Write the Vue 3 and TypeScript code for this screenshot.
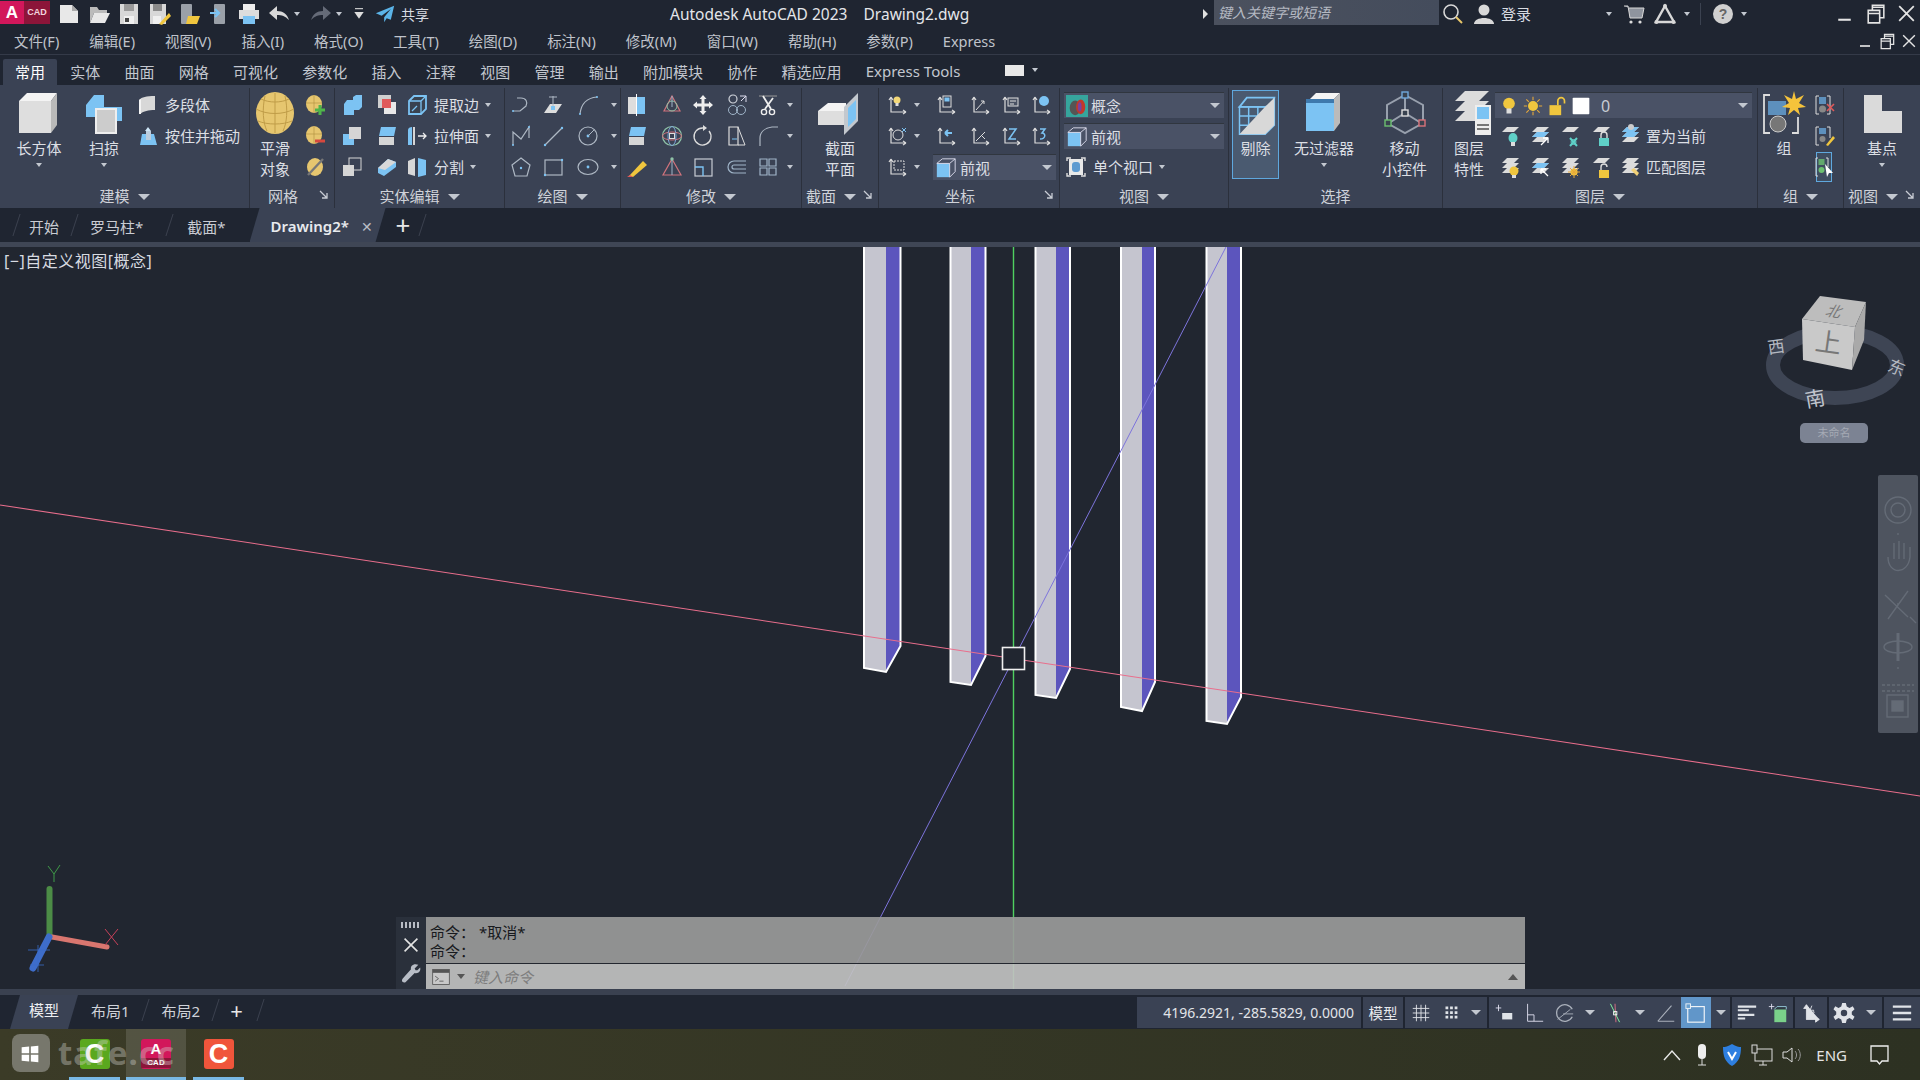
<script setup lang="ts">
interface Cell {
  k?: string
  i?: string
  more?: string[]
  t?: string
  drop?: boolean
  on?: boolean
  span?: number
}
interface Panel {
  title: string
  w: number
  cols: string
  pad?: number
  cells: Cell[]
  menu?: boolean
  launch?: boolean
}

const W = '#dcdcdc'
const B = '#7cc3f3'
const L = '#9fb4c8'
const sheet = (y: number, c = W) => `<polygon points="5,${y + 5} 10,${y} 22,${y} 17,${y + 5}" fill="${c}"/>`
const sheets = sheet(3) + sheet(8) + sheet(13)
const axes = `<path d="M6 4V19H21M6 4L4 7M6 4L8 7M21 19L18 17M21 19L18 21" stroke="${W}" fill="none" stroke-width="1.2"/>`
const pts = (d: string) => `<path d="${d}" stroke="#aeb8c4" stroke-width="1.2" fill="none"/>`

const icons: Record<string, string> = {
  box: `<polygon points="2,6 6,2 21,2 18,6" fill="#f4f4f4"/><polygon points="2,6 18,6 18,22 2,22" fill="#dedede"/><polygon points="18,6 21,2 21,18 18,22" fill="#b9b9b9"/>`,
  sweep: `<path d="M3 8L7 3H12V9H21V16H17V19H8V14H3Z" fill="${B}"/><rect x="8" y="10" width="10" height="12" fill="#ccc" stroke="#eee"/>`,
  poly: `<path d="M3 7C6 4 10 3 19 3V17C12 17 8 18 4 21Z" fill="#d8d8d8"/><path d="M3 7V21H5V6Z" fill="#f4f4f4"/>`,
  press: `<path d="M4 21L6 10H18L21 21Z" fill="${B}"/><path d="M12 3L9 7H15Z" fill="#cfe6f7"/><rect x="10" y="7" width="5" height="9" fill="#bcd"/>`,
  sphere: `<ellipse cx="12" cy="12" rx="9.5" ry="10.5" fill="#e6c66f"/><path d="M2.5 10C8 13 16 13 21.5 10M3.5 16C8 18 16 18 20.5 16M5 5C9 7 15 7 19 5M12 2V22M7 3.5C5.5 10 6 17 8 21M17 3.5C18.5 10 18 17 16 21" stroke="#c09d48" stroke-width=".5" fill="none"/>`,
  meshp: `<ellipse cx="11" cy="11" rx="8" ry="9" fill="#e6c66f"/><path d="M3 10H19M11 2V20" stroke="#b08e3e" stroke-width=".6"/><path d="M17 12V22M12 17H22" stroke="#4fb54a" stroke-width="3"/>`,
  meshm: `<ellipse cx="11" cy="11" rx="8" ry="9" fill="#e6c66f"/><path d="M3 10H19M11 2V20" stroke="#b08e3e" stroke-width=".6"/><path d="M12 17H22" stroke="#d5483e" stroke-width="3"/>`,
  meshs: `<ellipse cx="12" cy="12" rx="8" ry="9" fill="#e6c66f"/><path d="M5 20L20 4" stroke="#777" stroke-width="2.4"/>`,
  union: `<path d="M3 10L6 6H12V3L15 1H21V13L18 16H13V21H3Z" fill="${B}" transform="translate(1 1)"/>`,
  sub: `<rect x="3" y="2" width="13" height="13" fill="#cfcfcf"/><rect x="9" y="9" width="12" height="12" fill="#e8e8e8"/><rect x="7" y="6" width="9" height="9" fill="#e05a5a"/>`,
  edge: `<path d="M4 8L9 3H21V16L16 21H4Z" fill="#39424f" stroke="${B}" stroke-width="1.8"/><path d="M4 8H16V21M16 8L21 3M7 18L12 13" stroke="${B}" stroke-width="1.3" fill="none"/>`,
  inter: `<rect x="3" y="10" width="11" height="11" fill="${B}"/><rect x="9" y="3" width="12" height="12" fill="#d5d5d5"/>`,
  thick: `<path d="M6 3H21L19 12H4Z" fill="${B}"/><path d="M4 13H19V21H4Z" fill="#d5d5d5"/>`,
  extr: `<path d="M3 21V6C3 4 5 3 7 3V21Z" fill="${B}"/><path d="M8 3H10V21H8Z" fill="#d5d5d5"/><path d="M13 12H21M18 9L21 12L18 15" stroke="#eee" fill="none" stroke-width="1.3"/>`,
  interf: `<rect x="3" y="10" width="11" height="11" fill="#d5d5d5"/><rect x="9" y="3" width="12" height="12" fill="none" stroke="#d5d5d5"/>`,
  slice: `<path d="M3 13L13 4L21 7V12L9 21L3 18Z" fill="${B}"/><path d="M3 13L13 4L21 7L10 15Z" fill="#d8d8d8"/>`,
  split: `<path d="M3 6L10 3V21L3 19Z" fill="#d8d8d8"/><path d="M13 3L21 5V20L13 22Z" fill="${B}"/>`,
  dline: pts('M4 18H11L17 13C19 9 17 5 12 5H8') + `<circle cx="4" cy="18" r="1" fill="${B}"/>`,
  plane: `<path d="M3 20L9 11H21L15 20Z" fill="#ddd"/><path d="M12 3V15M8 4H16" stroke="#aeb8c4"/><rect x="10" y="13" width="4" height="4" fill="${B}"/>`,
  arc: pts('M4 21C5 11 11 5 21 4') + `<circle cx="4" cy="21" r="1" fill="${B}"/><circle cx="21" cy="4" r="1" fill="${B}"/>`,
  spline: pts('M4 21V8L12 15L20 3V14') + `<circle cx="4" cy="21" r="1" fill="${B}"/><circle cx="20" cy="3" r="1" fill="${B}"/>`,
  line: pts('M4 21L21 4') + `<circle cx="4" cy="21" r="1.2" fill="${B}"/><circle cx="21" cy="4" r="1.2" fill="${B}"/>`,
  circle: `<circle cx="12" cy="12" r="9" stroke="#aeb8c4" fill="none" stroke-width="1.2"/><circle cx="12" cy="12" r="1.4" fill="${B}"/><path d="M12 12L18 6" stroke="#aeb8c4"/>`,
  pent: pts('M12 3L21 10L18 21H6L3 10Z') + `<circle cx="12" cy="13" r="1.2" fill="${B}"/>`,
  rect: `<rect x="4" y="5" width="17" height="15" fill="none" stroke="#aeb8c4" stroke-width="1.2"/><circle cx="4" cy="20" r="1.2" fill="${B}"/><circle cx="21" cy="5" r="1.2" fill="${B}"/>`,
  ellip: `<ellipse cx="12" cy="12" rx="10" ry="7.5" stroke="#aeb8c4" fill="none" stroke-width="1.2"/><circle cx="12" cy="12" r="1.4" fill="${B}"/>`,
  align: `<rect x="3" y="4" width="8" height="17" fill="#ddd"/><rect x="12" y="4" width="8" height="17" fill="${B}"/><path d="M11.5 1V23" stroke="#fff"/>`,
  rot3d: `<path d="M12 3L20 18H4Z" fill="none" stroke="#d0737c" stroke-width="1.2"/><circle cx="12" cy="13" r="5" fill="none" stroke="#8fc3a8"/><path d="M12 3V14" stroke="${L}"/>`,
  orbit: `<circle cx="12" cy="12" r="9.5" fill="none" stroke="#8fc3a8" stroke-width="1.2"/><ellipse cx="12" cy="12" rx="9.5" ry="4" fill="none" stroke="#d0737c"/><ellipse cx="12" cy="12" rx="4" ry="9.5" fill="none" stroke="#7fa8d8"/><rect x="9.5" y="9.5" width="5" height="5" fill="none" stroke="#ddd"/>`,
  move: `<path d="M12 2L15.5 6H13.5V10.5H18V8.5L22 12L18 15.5V13.5H13.5V18H15.5L12 22L8.5 18H10.5V13.5H6V15.5L2 12L6 8.5V10.5H10.5V6H8.5Z" fill="#eee"/>`,
  copy: `<circle cx="8" cy="6" r="4" fill="none" stroke="#cfd3da" stroke-width="1.2"/><circle cx="8" cy="17" r="4.5" fill="none" stroke="${L}"/><circle cx="16" cy="17" r="4.5" fill="none" stroke="${L}"/><path d="M15 3H21V9M21 3L16 8" stroke="#dde" fill="none"/>`,
  scis: `<path d="M3 3H21" stroke="#999"/><path d="M7 3L15 16M17 5L9 16" stroke="#eee" stroke-width="1.8"/><circle cx="8" cy="19" r="2.6" fill="none" stroke="#eee" stroke-width="1.4"/><circle cx="16" cy="19" r="2.6" fill="none" stroke="#eee" stroke-width="1.4"/>`,
  rotate: `<path d="M18 7A8.5 8.5 0 1 1 12 4" stroke="#ddd" fill="none" stroke-width="1.3"/><path d="M12 1V7L16 4Z" fill="#ddd"/>`,
  stretch: `<path d="M4 3H13V21H4Z" fill="none" stroke="#ddd" stroke-width="1.2"/><path d="M13 3L20 21H13" fill="none" stroke="#ddd"/><path d="M7 15H12" stroke="${B}"/>`,
  fillet: pts('M4 22V14C4 8 9 4 16 3H22'),
  pencil: `<path d="M4 21L18 6L22 10L8 22Z" fill="#f0c63e"/><path d="M2 22L5 20L8 22Z" fill="#e05a5a"/>`,
  tri: `<path d="M12 4L21 20H3Z" fill="none" stroke="#d0737c" stroke-width="1.2"/><path d="M12 4V20" stroke="${L}"/><circle cx="12" cy="4" r="1.7" fill="#8fc3a8"/>`,
  scale: `<rect x="4" y="4" width="17" height="17" fill="none" stroke="#c7ccd4" stroke-width="1.2"/><path d="M4 12H12V21" fill="none" stroke="${B}" stroke-width="1.4"/>`,
  offset: `<path d="M21 6H9A6 6 0 0 0 9 18H21M21 10H9A2 2 0 0 0 9 14H21" fill="none" stroke="${L}" stroke-width="1.2"/>`,
  array: `<path d="M4 4H11V11H4ZM13 4H20V11H13ZM4 13H11V20H4ZM13 13H20V20H13Z" fill="none" stroke="${L}" stroke-width="1.2"/>`,
  section: `<polygon points="1,11 6,7 15,7 15,11" fill="#f4f4f4"/><polygon points="1,11 15,11 15,18 1,18" fill="#dedede"/><polygon points="14,9 21,2 21,16 14,23" fill="#c3c8ce"/><polygon points="16,9.5 20,5.5 20,15 16,19" fill="${B}"/>`,
  ucs1: axes + `<circle cx="12" cy="7" r="3.5" fill="#f3d878"/><rect x="10.5" y="10" width="3" height="3" fill="#ddd"/>`,
  ucs2: axes + `<rect x="9" y="3" width="8" height="11" fill="none" stroke="#ddd"/><rect x="10.5" y="4.5" width="5" height="4" fill="${B}"/>`,
  ucs3: axes + `<path d="M8 17L16 8M13 8H16V11" stroke="#ddd" fill="none"/>`,
  ucs4: axes + `<rect x="9" y="5" width="10" height="8" fill="#4a5263" stroke="#ddd"/><path d="M11 8H17M11 11H15" stroke="#ddd"/>`,
  ucs5: axes + `<circle cx="15" cy="8" r="5" fill="${B}"/>`,
  ucs6: axes + `<circle cx="13" cy="11" r="5" fill="none" stroke="#ddd"/><path d="M17 4L21 8M21 4L17 8" stroke="${B}"/>`,
  ucs7: axes + `<path d="M18 9H11M11 9L14 6M11 9L14 12" stroke="${B}" stroke-width="2" fill="none"/>`,
  ucs8: axes + `<path d="M8 17L17 8" stroke="#ddd"/><path d="M13 11L17 15" stroke="#ddd"/>`,
  ucsz: axes + `<path d="M10 5H17L10 15H17" stroke="${B}" fill="none" stroke-width="1.5"/>`,
  ucs3n: axes + `<path d="M11 5H16L13 9C17 9 17 15 11 15" stroke="${B}" fill="none" stroke-width="1.5"/>`,
  ucsw: axes + `<rect x="9" y="6" width="10" height="9" fill="none" stroke="#ddd" stroke-dasharray="2 1"/>`,
  conc: `<rect width="24" height="24" fill="#36a59d"/><ellipse cx="10" cy="14" rx="6" ry="8" fill="#555"/><ellipse cx="16" cy="13" rx="5" ry="8" fill="#c0392b"/><ellipse cx="15" cy="13" rx="2" ry="5" fill="#7b3fa0"/>`,
  front: `<rect x="2" y="7" width="14" height="15" fill="${B}"/><path d="M2 7L8 2H22V16L16 22M16 7L22 2M2 7H16V22" fill="none" stroke="#dde" stroke-width="1"/>`,
  vport: `<path d="M3 6V3H7M21 6V3H17M3 18V21H7M21 18V21H17" stroke="#ddd" fill="none" stroke-width="1.4"/><rect x="5" y="4" width="14" height="16" fill="#e8e8e8"/><rect x="8" y="7" width="8" height="10" rx="3" fill="#5d9ad0"/>`,
  hide: `<polygon points="3,7 7,2 22,2 21,6 17,7" fill="none" stroke="${B}"/><path d="M3 7H17V22H3ZM22 2V17L17 22M3 12H17M3 17H17M8 7V22M13 7V22" fill="none" stroke="${B}" stroke-width=".8"/><polygon points="3,22 17,7 22,2 22,17 17,22" fill="#d8d8d8"/>`,
  filter: `<polygon points="5,5 8,2 20,2 17,5" fill="#f4f4f4"/><polygon points="17,5 20,2 20,17 17,21" fill="#bbb"/><rect x="3" y="5" width="14" height="16" fill="${B}"/><rect x="3" y="5" width="14" height="2" fill="#3e79ad"/>`,
  gizmo: `<path d="M12 3L21 8V17L12 22L3 17V8Z" fill="none" stroke="#98a0ad"/><path d="M12 3V12M12 12L4 17M12 12L20 17" stroke="#98a0ad"/><rect x="10.5" y="1.5" width="3" height="3" fill="#39424f" stroke="#6fa8dc" stroke-width=".7"/><rect x="10.5" y="10.5" width="3" height="3" fill="#39424f" stroke="#ddd" stroke-width=".7"/><rect x="2" y="15.5" width="3" height="3" fill="#39424f" stroke="#6cc070" stroke-width=".7"/><rect x="19" y="15.5" width="3" height="3" fill="#39424f" stroke="#d9737a" stroke-width=".7"/>`,
  layers: sheet(1) + sheet(6) + sheet(11) + `<rect x="15" y="8" width="8" height="15" fill="#eee"/><rect x="16" y="9" width="6" height="6" fill="${B}"/><path d="M16 18H22M16 20H22" stroke="#777"/>`,
  bulb: `<circle cx="12" cy="9" r="7" fill="#f0c63e"/><rect x="9" y="15" width="6" height="6" fill="#ddd"/>`,
  sun: `<circle cx="12" cy="12" r="6" fill="#f0c63e"/><path d="M12 1V5M12 19V23M1 12H5M19 12H23M4 4L7 7M17 17L20 20M20 4L17 7M7 17L4 20" stroke="#e8a93a" stroke-width="1.3"/>`,
  unlock: `<rect x="3" y="11" width="14" height="12" fill="#f0c63e"/><path d="M13 11V6A4 4 0 0 1 21 6V9" fill="none" stroke="#f0c63e" stroke-width="2"/>`,
  wsq: `<rect x="2" y="2" width="20" height="20" rx="1" fill="#fff"/>`,
  l1: sheet(3) + `<ellipse cx="16" cy="14" rx="4.5" ry="5" fill="#5fd0c8"/><rect x="14" y="18" width="4" height="4" fill="#ddd"/>`,
  l2: sheets + sheet(8, B) + `<path d="M14 21L21 14M21 14V19M21 14H16" stroke="#fff" stroke-width="1.3" fill="none"/>`,
  l3: sheet(3) + `<path d="M13 14L20 22M20 14L13 22" stroke="#5fd0c8" stroke-width="2"/><circle cx="16.5" cy="18" r="2.5" fill="none" stroke="#5fd0c8"/>`,
  l4: sheet(3) + `<rect x="11" y="14" width="10" height="8" fill="#5fd0c8"/><path d="M13 14V11A3 3 0 0 1 19 11V14" stroke="#ddd" fill="none" stroke-width="1.4"/>`,
  lcur: sheets + sheet(8, B) + sheet(3, B) + `<circle cx="14" cy="3" r="3" fill="#ccc"/>`,
  l5: sheets + `<circle cx="17" cy="16" r="4.5" fill="#f0c63e"/><rect x="15" y="20" width="4" height="3" fill="#ddd"/>`,
  l6: sheets + sheet(8, B) + `<path d="M14 14L21 21M14 14V19M14 14H19" stroke="#fff" stroke-width="1.3" fill="none"/>`,
  l7: sheets + `<circle cx="17" cy="17" r="3.6" fill="#f0c63e"/><path d="M17 11V23M11 17H23M13 13L21 21M21 13L13 21" stroke="#e8a93a"/>`,
  l8: sheet(3) + `<rect x="11" y="15" width="10" height="8" fill="#f0c63e"/><path d="M13 15V12A3 3 0 0 1 19 12" stroke="#ddd" fill="none" stroke-width="1.4"/>`,
  lm: sheets + `<path d="M14 15L20 21L22 18L17 13Z" fill="#f0d078"/>`,
  grp: `<path d="M5 3H2V22H5M16 22H19V14" stroke="#ddd" fill="none" stroke-width=".9"/><rect x="4" y="6" width="9" height="7" fill="#5d90bd"/><circle cx="9" cy="17.5" r="4" fill="#777" stroke="#ccc" stroke-width=".5"/><path d="M17 1L18 5L22 3L19.5 7L23 9L19 9.5L20 13L17 10.5L14 13L15 9.5L11 9L14.5 7L12 3L16 5Z" fill="#f5c33b"/>`,
  ung: `<path d="M7 3H4V21H7M15 3H18V21H15" stroke="#ddd" fill="none"/><rect x="7" y="4" width="7" height="7" fill="#5d90bd"/><circle cx="10.5" cy="16" r="3.5" fill="#888"/><path d="M15 11L22 18M22 11L15 18" stroke="#e05a5a" stroke-width="1.6"/>`,
  gedit: `<path d="M7 3H4V21H7M15 3H18V14" stroke="#ddd" fill="none"/><rect x="7" y="4" width="7" height="6" fill="#5d90bd"/><circle cx="10.5" cy="15" r="3" fill="#888"/><path d="M14 21L21 12L23 14L16 22Z" fill="#f0c63e"/>`,
  gsel: `<path d="M6 3H4V21H6M14 3H16V12" stroke="#ddd" fill="none"/><rect x="6.5" y="4" width="6" height="6" fill="#6cc070" fill-opacity=".8"/><circle cx="9.5" cy="15" r="3" fill="#6cc070"/><path d="M13 9L21 18L17 18L15 22Z" fill="#fff"/>`,
  base: `<path d="M3 3H12V11H22V22H3Z" fill="#dadada"/>`,
  new: `<path d="M3 3H15L21 9V21H3Z" fill="#e8e8e8"/><path d="M15 3V9H21Z" fill="#aaa"/>`,
  open: `<path d="M3 5H10L12 8H20V11H7L3 21Z" fill="#bbb"/><path d="M7 11H23L18 21H3Z" fill="#e8e8e8"/>`,
  save: `<path d="M3 2H21V22H3Z" fill="#d8d8d8"/><rect x="7" y="2" width="10" height="7" fill="#9a9a9a"/><rect x="7" y="14" width="10" height="8" fill="#f0f0f0"/><rect x="8" y="16" width="4" height="4" fill="#444"/>`,
  saveas: `<path d="M3 2H19V22H3Z" fill="#d8d8d8"/><rect x="6" y="2" width="9" height="7" fill="#8a8a8a"/><rect x="6" y="14" width="8" height="8" fill="#f0f0f0"/><path d="M12 22L22 11L24 14L15 23Z" fill="#f0c63e"/>`,
  openw: `<rect x="4" y="2" width="11" height="20" rx="1" fill="#9aa0a8"/><path d="M11 14H23L20 22H9Z" fill="#f0c63e"/>`,
  savew: `<rect x="7" y="2" width="11" height="20" rx="1" fill="#9aa0a8"/><path d="M3 11H12M8 7L12 11L8 15" stroke="${B}" stroke-width="2.2" fill="none"/>`,
  print: `<rect x="6" y="2" width="12" height="6" fill="#eee"/><rect x="2" y="8" width="20" height="9" fill="#ddd"/><rect x="6" y="14" width="12" height="8" fill="${B}"/>`,
  undo: `<path d="M2 11L10 4V9C16 9 20 12 22 18C18 14 15 13 10 13V18Z" fill="#d8d8d8"/>`,
  redo: `<path d="M22 11L14 4V9C8 9 4 12 2 18C6 14 9 13 14 13V18Z" fill="#656b78"/>`,
  qat: `<path d="M6 4H18" stroke="#ddd" stroke-width="1.6"/><path d="M5 9H19L12 19Z" fill="#ddd"/>`,
  send: `<path d="M23 2L1 11L8 14L19 6L11 16V22L14 17L19 19Z" fill="#5bb4e8"/>`,
  search: `<circle cx="10" cy="10" r="7" fill="none" stroke="#d8d8d8" stroke-width="1.6"/><path d="M15 15L21 21" stroke="#e8c66a" stroke-width="2"/>`,
  user: `<circle cx="12" cy="8" r="5.5" fill="#d8d8d8"/><path d="M2 22C2 14 22 14 22 22Z" fill="#d8d8d8"/>`,
  cart: `<path d="M2 4H6L8 16H20L22 6H7" fill="#8f949e" stroke="#d8d8d8"/><circle cx="9" cy="20" r="1.6" fill="#ddd"/><circle cx="18" cy="20" r="1.6" fill="#ddd"/>`,
  a360: `<path d="M12 4L21 20H3Z" fill="none" stroke="#d8d8d8" stroke-width="2.4"/><circle cx="12" cy="4" r="2" fill="#d8d8d8"/><circle cx="3.5" cy="20" r="2" fill="#d8d8d8"/><circle cx="20.5" cy="20" r="2" fill="#d8d8d8"/>`,
  help: `<circle cx="12" cy="12" r="10" fill="#d0d0d0"/><text x="12" y="17" text-anchor="middle" font-size="14" font-weight="700" fill="#666" font-family="Liberation Sans">?</text>`,
  min: `<path d="M6 18H18" stroke="#e4e4e4" stroke-width="2"/>`,
  rest: `<path d="M5 9H16V21H5ZM5 9V12H16M9 9V4H20V16H16M9 4V6H20" stroke="#e4e4e4" fill="none" stroke-width="1.5"/>`,
  close: `<path d="M5 5L19 19M19 5L5 19" stroke="#e4e4e4" stroke-width="1.7"/>`,
  grid: `<path d="M7 3V21M12 3V21M17 3V21M3 7H21M3 12H21M3 17H21" stroke="#e0e3e8"/>`,
  dots: `<path d="M6 5h3v3H6zM11 5h3v3h-3zM16 5h3v3h-3zM6 10h3v3H6zM11 10h3v3h-3zM16 10h3v3h-3zM6 15h3v3H6zM11 15h3v3h-3zM16 15h3v3h-3z" fill="#e0e3e8"/>`,
  dyn: `<path d="M6 3V10M3 6.5H9" stroke="#dde" /><rect x="10" y="12" width="11" height="7" fill="#dfe3e8"/>`,
  ortho: `<path d="M5 2V21H22M5 14H12V21" stroke="#dde" fill="none"/>`,
  polar: `<path d="M21 8A9 9 0 1 0 21 16" fill="none" stroke="#aab0bb" stroke-width="1.4"/><path d="M5 19L19 8M11 13H22" stroke="#aab0bb"/>`,
  osnap: `<path d="M12 2L13 22" stroke="#c46a7e" stroke-width="1.2"/><path d="M7 2L17 22" stroke="#8fa"/><rect x="10.5" y="10.5" width="3.5" height="3.5" fill="none" stroke="#fff"/>`,
  angle: `<path d="M3 21H21M3 21L18 4" stroke="#aab0bb" stroke-width="1.2"/>`,
  mbox: `<rect x="3" y="5" width="18" height="17" fill="none" stroke="#eef3f8" stroke-width="1.3"/><rect x="1" y="2" width="5" height="5" fill="#6aa0d0" stroke="#eef3f8"/>`,
  lines: `<path d="M2 5H22M2 9H14M2 14H20M2 18H10" stroke="#e0e3e8" stroke-width="2.4"/>`,
  iso: `<path d="M5 2V8M2 5H8" stroke="#dde"/><rect x="8" y="8" width="13" height="14" fill="#7ad18a"/><path d="M8 8L11 5H21V8" fill="#2f3a44" stroke="#9cd"/>`,
  axis: `<path d="M7 3V19H21M7 19L16 11M7 3L4 7H10ZM21 19L17 16V22Z" stroke="#e0e3e8" fill="#e0e3e8"/><path d="M13 4L11 9H15L13 14" stroke="#e0e3e8" fill="none"/>`,
  gear: `<path d="M10 1H14L15 5L18 6.5L21.5 4.5L23.5 8L20.5 10.5V13.5L23.5 16L21.5 19.5L18 17.5L15 19L14 23H10L9 19L6 17.5L2.5 19.5L.5 16L3.5 13.5V10.5L.5 8L2.5 4.5L6 6.5L9 5ZM12 8.5A3.5 3.5 0 1 0 12 15.5A3.5 3.5 0 1 0 12 8.5Z" fill="#e0e3e8" fill-rule="evenodd"/>`,
  burger: `<path d="M2 5H22M2 12H22M2 19H22" stroke="#e0e3e8" stroke-width="2.6"/>`,
  chev: `<path d="M4 17L12 8L20 17" stroke="#e8e8e8" fill="none" stroke-width="1.4"/>`,
  mic: `<rect x="8" y="1" width="8" height="15" rx="4" fill="#eee"/><path d="M12 16V22M8 22H16" stroke="#ddd"/>`,
  shield: `<path d="M12 1C16 3.5 19 4 21 4C21 13 19 19 12 23C5 19 3 13 3 4C5 4 8 3.5 12 1Z" fill="#2e7fe0"/><path d="M8 9L12 16L16 9" stroke="#fff" fill="none" stroke-width="2"/>`,
  net: `<rect x="5" y="6" width="17" height="12" fill="none" stroke="#ddd"/><rect x="2" y="2" width="5" height="8" fill="#33352a" stroke="#ddd"/><path d="M13 18V22M9 22H17" stroke="#ddd"/>`,
  vol: `<path d="M3 9H7L12 5V19L7 15H3Z" fill="none" stroke="#ddd"/><path d="M15 8C17 10 17 14 15 16M18 6C21 9 21 15 18 18" stroke="#999" fill="none"/>`,
  note: `<path d="M4 3H21V18H15L12.5 21L10 18H4Z" fill="none" stroke="#eee" stroke-width="1.3"/>`,
  term: `<rect x="2" y="3" width="20" height="18" fill="#c8c8c8" stroke="#555"/><rect x="2" y="3" width="20" height="4" fill="#555"/><path d="M5 11L9 14L5 17M10 17H15" stroke="#555" fill="none"/>`,
  wrench: `<path d="M20 3L16 7L17 9L19 9L22 6C23 10 20 13 16 12L6 22C3 23 1 21 3 18L12 8C11 4 15 1 20 3Z" fill="#b8bdc6"/>`,
  win: `<path d="M2 4L11 3V11H2ZM13 3L22 2V11H13ZM2 13H11V21L2 20ZM13 13H22V22L13 21Z" fill="#fff"/>`
}

const panels: Panel[] = [
  { title: '建模', w: 250, menu: true, cols: '78px 52px 6px 1fr', cells: [
    { k: 'big', i: 'box', t: '长方体', drop: true }, { k: 'big', i: 'sweep', t: '扫掠', drop: true }, { k: 'sp' },
    { k: 'txt', i: 'poly', t: '多段体' }, { k: 'txt', i: 'press', t: '按住并拖动' }
  ] },
  { title: '网格', w: 85, launch: true, cols: '50px 30px', cells: [
    { k: 'big', i: 'sphere', t: '平滑\n对象' }, { i: 'meshp' }, { i: 'meshm' }, { i: 'meshs' }
  ] },
  { title: '实体编辑', w: 170, menu: true, cols: '34px 36px 1fr', cells: [
    { i: 'union' }, { i: 'sub' }, { k: 'txt', i: 'edge', t: '提取边', drop: true },
    { i: 'inter' }, { i: 'thick' }, { k: 'txt', i: 'extr', t: '拉伸面', drop: true },
    { i: 'interf' }, { i: 'slice' }, { k: 'txt', i: 'split', t: '分割', drop: true }
  ] },
  { title: '绘图', w: 116, menu: true, cols: '32px 32px 38px 14px', cells: [
    { i: 'dline' }, { i: 'plane' }, { i: 'arc' }, { k: 'cr' },
    { i: 'spline' }, { i: 'line' }, { i: 'circle' }, { k: 'cr' },
    { i: 'pent' }, { i: 'rect' }, { i: 'ellip' }, { k: 'cr' }
  ] },
  { title: '修改', w: 181, menu: true, cols: '32px 38px 24px 44px 18px 25px', cells: [
    { i: 'align' }, { i: 'rot3d' }, { i: 'move' }, { i: 'copy' }, { i: 'scis' }, { k: 'cr' },
    { i: 'thick' }, { i: 'orbit' }, { i: 'rotate' }, { i: 'stretch' }, { i: 'fillet' }, { k: 'cr' },
    { i: 'pencil' }, { i: 'tri' }, { i: 'scale' }, { i: 'offset' }, { i: 'array' }, { k: 'cr' }
  ] },
  { title: '截面', w: 77, menu: true, launch: true, cols: '1fr', cells: [{ k: 'big', i: 'section', t: '截面\n平面' }] },
  { title: '坐标', w: 181, launch: true, pad: 6, cols: '24px 16px 42px 26px 36px 24px', cells: [
    { i: 'ucs1' }, { k: 'cr' }, { i: 'ucs2' }, { i: 'ucs3' }, { i: 'ucs4' }, { i: 'ucs5' },
    { i: 'ucs6' }, { k: 'cr' }, { i: 'ucs7' }, { i: 'ucs8' }, { i: 'ucsz' }, { i: 'ucs3n' },
    { i: 'ucsw' }, { k: 'cr' }, { k: 'combo narrow', i: 'front', t: '前视', span: 4 }
  ] },
  { title: '视图', w: 169, menu: true, pad: 4, cols: '160px', cells: [
    { k: 'combo', i: 'conc', t: '概念' }, { k: 'combo', i: 'front', t: '前视' },
    { k: 'txt', i: 'vport', t: '单个视口', drop: true }
  ] },
  { title: '选择', w: 214, cols: '53px 84px 77px', cells: [
    { k: 'big', i: 'hide', t: '剔除', on: true }, { k: 'big', i: 'filter', t: '无过滤器', drop: true }, { k: 'big', i: 'gizmo', t: '移动\n小控件' }
  ] },
  { title: '图层', w: 315, menu: true, cols: '52px 28px 32px 28px 34px 1fr', cells: [
    { k: 'big', i: 'layers', t: '图层\n特性' },
    { k: 'combo layer', more: ['bulb', 'sun', 'unlock', 'wsq'], t: '0', span: 5 },
    { i: 'l1' }, { i: 'l2' }, { i: 'l3' }, { i: 'l4' }, { k: 'txt', i: 'lcur', t: '置为当前' },
    { i: 'l5' }, { i: 'l6' }, { i: 'l7' }, { i: 'l8' }, { k: 'txt', i: 'lm', t: '匹配图层' }
  ] },
  { title: '组', w: 86, menu: true, cols: '52px 28px', cells: [
    { k: 'big', i: 'grp', t: '组' }, { i: 'ung' }, { i: 'gedit' }, { i: 'gsel', on: true }
  ] },
  { title: '视图', w: 76, menu: true, launch: true, cols: '1fr', cells: [{ k: 'big', i: 'base', t: '基点', drop: true }] }
]

const qat = ['new', 'open', 'save', 'saveas', 'openw', 'savew', 'print']
const menus = ['文件(F)', '编辑(E)', '视图(V)', '插入(I)', '格式(O)', '工具(T)', '绘图(D)', '标注(N)', '修改(M)', '窗口(W)', '帮助(H)', '参数(P)', 'Express']
const tabs = ['常用', '实体', '曲面', '网格', '可视化', '参数化', '插入', '注释', '视图', '管理', '输出', '附加模块', '协作', '精选应用', 'Express Tools']

const status = [
  [{ i: 'grid', w: 32 }, { i: 'dots', w: 28 }, { w: 22 }],
  [{ i: 'dyn', w: 30 }, { i: 'ortho', w: 30 }, { i: 'polar', w: 30 }, { w: 22 }, { i: 'osnap', w: 28 }, { w: 22 }, { i: 'angle', w: 30 }, { i: 'mbox', w: 30, on: true }, { w: 19 }],
  [{ i: 'lines', w: 30 }, { i: 'iso', w: 31 }],
  [{ i: 'axis', w: 32 }],
  [{ i: 'gear', w: 30 }, { w: 23 }],
  [{ i: 'burger', w: 36 }]
]

// column footprints in the drawing: left, split, right edge and the three bottom ends
const columns = [
  { a: 864, b: 886, c: 900.5, yl: 668, ym: 672, yr: 646 },
  { a: 950.5, b: 971, c: 985.5, yl: 682, ym: 685, yr: 656 },
  { a: 1035.5, b: 1056, c: 1070, yl: 695, ym: 698, yr: 669 },
  { a: 1121, b: 1142, c: 1155, yl: 707, ym: 711, yr: 682 },
  { a: 1206.5, b: 1227, c: 1241, yl: 721, ym: 724, yr: 697 }
]
</script>

<template>
  <div class="app">
    <header class="title">
      <div class="logo"><b>A</b><span>CAD</span></div>
      <div class="qat">
        <span v-for="q in qat" :key="q" class="slot"><svg class="ic" viewBox="0 0 24 24" v-html="icons[q]" /></span>
        <span class="slot"><svg class="ic" viewBox="0 0 24 24" v-html="icons.undo" /></span>
        <i class="caret tiny" />
        <span class="slot"><svg class="ic" viewBox="0 0 24 24" v-html="icons.redo" /></span>
        <i class="caret tiny" />
        <svg class="qat-more" viewBox="0 0 24 24" v-html="icons.qat" />
        <svg class="share-ic" viewBox="0 0 24 24" v-html="icons.send" />
        <span class="share">共享</span>
      </div>
      <div class="doc-name">Autodesk AutoCAD 2023&nbsp;&nbsp;&nbsp;&nbsp;Drawing2.dwg</div>
      <i class="more-tri" />
      <div class="search">键入关键字或短语</div>
      <span class="slot w28"><svg class="ic" viewBox="0 0 24 24" v-html="icons.search" /></span>
      <span class="slot w34"><svg class="ic" viewBox="0 0 24 24" v-html="icons.user" /></span>
      <span class="login">登录</span>
      <i class="caret small login-caret" />
      <span class="slot cart"><svg class="ic" viewBox="0 0 24 24" v-html="icons.cart" /></span>
      <span class="slot w26"><svg class="ic" viewBox="0 0 24 24" v-html="icons.a360" /></span>
      <i class="caret small" />
      <span class="vsep" />
      <span class="slot w24"><svg class="ic" viewBox="0 0 24 24" v-html="icons.help" /></span>
      <i class="caret small help-caret" />
      <div class="win">
        <svg viewBox="0 0 24 24" v-html="icons.min" />
        <svg viewBox="0 0 24 24" v-html="icons.rest" />
        <svg viewBox="0 0 24 24" v-html="icons.close" />
      </div>
    </header>

    <nav class="menubar">
      <span v-for="m in menus" :key="m">{{ m }}</span>
      <div class="win mini">
        <svg viewBox="0 0 24 24" v-html="icons.min" />
        <svg viewBox="0 0 24 24" v-html="icons.rest" />
        <svg viewBox="0 0 24 24" v-html="icons.close" />
      </div>
    </nav>

    <nav class="ribbon-tabs">
      <span v-for="(t, n) in tabs" :key="t" :class="{ active: n === 0 }">{{ t }}</span>
      <i class="tab-state" />
      <i class="caret tiny" />
    </nav>

    <section class="ribbon">
      <div v-for="(p, n) in panels" :key="n" class="panel" :style="{ width: p.w + 'px' }">
        <div class="panel-body" :style="{ gridTemplateColumns: p.cols, paddingLeft: (p.pad || 0) + 'px' }">
          <div
            v-for="(c, j) in p.cells"
            :key="j"
            class="cell"
            :class="[c.k, { on: c.on }]"
            :style="c.span ? { gridColumn: 'span ' + c.span } : undefined"
          >
            <i v-if="c.k === 'cr'" class="caret small" />
            <template v-else-if="c.k !== 'sp'">
              <svg v-for="m in c.more" :key="m" class="ic" viewBox="0 0 24 24" v-html="icons[m]" />
              <svg v-if="c.i" class="ic" viewBox="0 0 24 24" v-html="icons[c.i]" />
              <span v-if="c.t" class="label">{{ c.t }}</span>
              <i v-if="c.drop || c.k?.startsWith('combo')" class="caret small" />
            </template>
          </div>
        </div>
        <footer class="panel-foot">
          <div class="foot-title">{{ p.title }}<i v-if="p.menu" class="caret" /></div>
          <svg v-if="p.launch" class="launch" viewBox="0 0 10 10"><path d="M1 1L8 8M8 3V8H3" stroke="#c8ccd4" fill="none" stroke-width="1.3" /></svg>
        </footer>
      </div>
    </section>

    <nav class="doc-tabs">
      <i class="slash" /><span class="dt w-a">开始</span>
      <i class="slash" /><span class="dt w-b">罗马柱*</span>
      <i class="slash" /><span class="dt w-c">截面*</span>
      <div class="dt-active"><b>Drawing2*</b><em>✕</em></div>
      <span class="plus">+</span>
      <i class="slash" />
    </nav>
    <div class="rule" />

    <main class="viewport">
      <svg class="scene" viewBox="0 247 1920 742">
        <g v-for="c in columns" :key="c.a">
          <polygon :points="`${c.a},247 ${c.b},247 ${c.b},${c.ym} ${c.a},${c.yl}`" fill="#c5c5cf" />
          <polygon :points="`${c.b},247 ${c.c},247 ${c.c},${c.yr} ${c.b},${c.ym}`" fill="#5c55bd" />
          <path :d="`M${c.a} 247V${c.yl}L${c.b} ${c.ym}L${c.c} ${c.yr}V247`" fill="none" stroke="#fff" stroke-width="2" />
        </g>
        <line x1="0" y1="505" x2="1920" y2="796" stroke="#e96e8c" stroke-width="1.1" />
        <line x1="845" y1="986" x2="1226" y2="247" stroke="#7d74dc" stroke-width="1" />
        <line x1="1013.5" y1="247" x2="1013.5" y2="989" stroke="#4fd060" stroke-width="1.4" />
        <rect x="1002.5" y="647.5" width="22" height="22" fill="#212630" stroke="#f0f0f0" stroke-width="1.6" />
        <!-- ucs icon -->
        <line x1="49.5" y1="889" x2="49.5" y2="935" stroke="#4c8c46" stroke-width="6" stroke-linecap="round" />
        <line x1="52" y1="937" x2="107" y2="947" stroke="#d9766f" stroke-width="5" stroke-linecap="round" />
        <line x1="49" y1="937" x2="33" y2="968" stroke="#3e6dca" stroke-width="7" stroke-linecap="round" />
        <path d="M48 866L54 874L60 865M54 874V882" stroke="#3f9a48" fill="none" />
        <path d="M105 929L118 945M118 929L105 945" stroke="#c8415a" fill="none" />
        <path d="M28 950H50M30 965H44M38 945V972" stroke="#3b6cc8" fill="none" stroke-width=".8" />
      </svg>

      <div class="view-label">[−]自定义视图[概念]</div>

      <svg class="cube" viewBox="1760 285 160 170">
        <ellipse cx="1835" cy="365" rx="62" ry="33" fill="none" stroke="#3e4554" stroke-width="14" />
        <polygon points="1820,296 1866,302 1855,327 1802,319" fill="#bdbdbd" />
        <polygon points="1802,319 1855,327 1852,370 1803,360" fill="#c9c9c9" />
        <polygon points="1855,327 1866,302 1864,340 1852,370" fill="#a9a9a9" />
        <text x="1828" y="352" class="cube-t" font-size="26" fill="#777" transform="rotate(8 1828 345)">上</text>
        <text x="0" y="6" class="cube-t" font-size="15" fill="#777" transform="translate(1835 311) rotate(8) skewX(-22)">北</text>
        <text x="1776" y="353" class="cube-t" font-size="17" fill="#b4b8c0" transform="rotate(-8 1776 346)">西</text>
        <text x="1897" y="374" class="cube-t" font-size="17" fill="#b4b8c0" transform="rotate(22 1897 367)">东</text>
        <text x="1815" y="406" class="cube-t" font-size="20" fill="#c0c4cc" transform="rotate(-10 1815 398)">南</text>
      </svg>
      <div class="ucs-name">未命名</div>

      <svg class="nav-bar" viewBox="0 0 40 258">
        <g fill="none" stroke="#646b76" stroke-width="1.4">
          <circle cx="20" cy="35" r="13" /><circle cx="20" cy="35" r="7" />
          <path d="M20 58v2M20 128v2M20 192v2" />
          <path d="M10 82c0 18 20 18 22 0v-10M16 84V68M21 84V66M26 84V68" />
          <path d="M7 120L30 142M30 116L10 144M32 142l6 6" />
          <ellipse cx="20" cy="172" rx="14" ry="6" /><path d="M20 158V186" stroke-width="3" />
          <path d="M4 210H36M4 216H36" stroke-dasharray="3 2" />
          <rect x="9" y="220" width="21" height="22" />
          <rect x="14" y="226" width="11" height="10" fill="#646b76" />
        </g>
      </svg>

      <section class="cmd">
        <div class="cmd-handle">
          <i class="grip" />
          <svg viewBox="0 0 24 24" v-html="icons.close" />
          <svg viewBox="0 0 24 24" v-html="icons.wrench" />
        </div>
        <div class="cmd-main">
          <div class="cmd-hist">
            <div>命令： *取消*</div>
            <div>命令：</div>
          </div>
          <div class="cmd-input">
            <svg viewBox="0 0 24 24" v-html="icons.term" />
            <i class="caret dark" />
            <span class="cmd-hint">键入命令</span>
            <i class="cmd-up" />
          </div>
        </div>
      </section>
    </main>

    <div class="rule low" />
    <footer class="layouts">
      <div class="lt-active">模型</div>
      <span class="lt lt-1">布局1</span><i class="slash" />
      <span class="lt lt-2">布局2</span><i class="slash" />
      <span class="plus small-plus">+</span><i class="slash" />
      <div class="status">
        <div class="sgroup coords">4196.2921, -285.5829, 0.0000</div>
        <div class="sgroup model">模型</div>
        <div v-for="(g, n) in status" :key="n" class="sgroup">
          <span
            v-for="(s, j) in g"
            :key="j"
            class="sitem"
            :class="{ on: s.on }"
            :style="{ width: s.w + 'px' }"
          >
            <svg v-if="s.i" class="ic" viewBox="0 0 24 24" v-html="icons[s.i]" />
            <i v-else class="caret" />
          </span>
        </div>
      </div>
    </footer>

    <footer class="taskbar">
      <div class="task t1"><div class="tile green"><span>C</span></div></div>
      <div class="task t2"><div class="tile red"><b>A</b><small>CAD</small></div></div>
      <div class="task t3"><div class="tile orange"><span>C</span></div></div>
      <div class="watermark"><i /><span>tafe.cc</span></div>
      <svg class="start" viewBox="0 0 24 24" v-html="icons.win" />
      <div class="tray">
        <svg viewBox="0 0 24 24" v-html="icons.chev" />
        <svg viewBox="0 0 24 24" v-html="icons.mic" />
        <svg viewBox="0 0 24 24" v-html="icons.shield" />
        <svg viewBox="0 0 24 24" v-html="icons.net" />
        <svg viewBox="0 0 24 24" v-html="icons.vol" />
        <span>ENG</span>
        <svg class="note" viewBox="0 0 24 24" v-html="icons.note" />
      </div>
    </footer>
  </div>
</template>

<style scoped>
.app {
  width: 1920px;
  height: 1080px;
  display: flex;
  flex-direction: column;
  overflow: hidden;
  background: #1f2531;
  color: #d8dbe1;
  font-family: "Noto Sans", "Noto Sans CJK SC", sans-serif;
  font-size: 15px;
}

.ic { width: 24px; height: 24px; flex: none; }

.caret {
  display: inline-block;
  width: 0;
  height: 0;
  border-left: 6px solid transparent;
  border-right: 6px solid transparent;
  border-top: 6px solid #c3c8d0;
  margin-left: 8px;
  vertical-align: middle;
}
.caret.small { border-width: 4px 3.5px 0; margin-left: 6px; }
.caret.tiny { border-width: 4px 3px 0; margin: 0 6px 0 0; }
.caret.dark { border-top-color: #555; border-width: 5px 4px 0; margin-left: 5px; }
.cr .caret.small { margin-left: 0; }

/* title bar */
.title { height: 27px; display: flex; align-items: center; flex: none; }
.logo { width: 50px; height: 23px; display: flex; background: #8c1539; margin-top: -2px; }
.logo b {
  width: 24px;
  background: #d2175b;
  color: #fff;
  text-align: center;
  font: 700 17px/23px "Liberation Sans", sans-serif;
}
.logo span { flex: 1; text-align: center; color: #f3d5df; font: 700 9px/23px "Liberation Sans", sans-serif; }
.qat { display: flex; align-items: center; margin-left: 4px; width: 616px; }
.slot { width: 30px; display: flex; justify-content: center; align-items: center; }
.qat-more { width: 16px; height: 16px; margin-left: 3px; }
.share-ic { width: 20px; height: 20px; margin-left: 8px; }
.share { margin-left: 6px; font-size: 14px; }
.doc-name { width: 533px; font-size: 15.5px; color: #e4e6ea; white-space: nowrap; }
.more-tri {
  width: 0;
  height: 0;
  border-left: 5px solid #e0e0e0;
  border-top: 5px solid transparent;
  border-bottom: 5px solid transparent;
  margin-right: 6px;
}
.search {
  width: 225px;
  height: 25px;
  margin-top: -2px;
  padding-left: 4px;
  box-sizing: border-box;
  background: linear-gradient(90deg, #4b515e, #444c5c);
  color: #b5b9c2;
  font-style: italic;
  font-size: 14px;
  line-height: 25px;
}
.w28 { width: 28px; }
.w34 { width: 34px; }
.w26 { width: 26px; }
.w24 { width: 24px; }
.cart { width: 36px; }
.login { width: 99px; }
.login-caret { margin-left: 7px; margin-right: 4px; }
.vsep { width: 1px; height: 22px; background: #3b4250; margin: 0 10px 0 10px; }
.help-caret { margin-left: 10px; }
.win { margin-left: auto; display: flex; align-items: center; padding-right: 1px; }
.win svg { width: 25px; height: 25px; margin-left: 6px; }
.win.mini svg { width: 20px; height: 20px; margin-left: 2px; }

/* menu + tabs */
.menubar {
  height: 27px;
  flex: none;
  display: flex;
  align-items: center;
  gap: 30px;
  padding-left: 14px;
  border-bottom: 1px solid #343a48;
  font-size: 14.5px;
  color: #bfc3cb;
}
.ribbon-tabs {
  height: 30px;
  flex: none;
  display: flex;
  align-items: center;
  gap: 24.25px;
  padding-left: 16px;
  font-size: 15px;
  color: #c3c7cf;
}
.ribbon-tabs span { margin-top: 2px; }
.ribbon-tabs .active {
  margin: 0 -11px 0 -13px;
  padding: 0 12px;
  height: 26px;
  line-height: 26px;
  align-self: flex-end;
  background: #3a4254;
  color: #fff;
  border-radius: 2px 2px 0 0;
}
.tab-state { width: 19px; height: 11px; margin-left: 20px; background: #e8e8e8; }
.ribbon-tabs .caret { margin: 0 0 0 -16px; }

/* ribbon */
.ribbon { height: 123px; display: flex; background: #3a4254; flex: none; }
.panel { display: flex; flex-direction: column; border-right: 1px solid #2b303c; box-sizing: border-box; margin-top: 3px; flex: none; }
.panel:last-child { border-right: 0; }
.panel-body { height: 93px; display: grid; grid-template-rows: 31px 31px 31px; margin-top: 1px; }
.panel-foot { flex: 1; display: flex; align-items: center; color: #cfd2d9; }
.foot-title { flex: 1; text-align: center; font-size: 15px; }
.launch { width: 10px; height: 10px; margin-right: 5px; margin-left: 3px; }
.cell { display: flex; align-items: center; justify-content: center; font-size: 15px; min-width: 0; color: #dcdfe4; }
.cell.txt { justify-content: flex-start; white-space: nowrap; }
.cell.txt .label { margin-left: 5px; }
.cell.big { grid-row: span 3; flex-direction: column; justify-content: flex-start; text-align: center; line-height: 21px; white-space: pre-line; }
.cell.big .ic { width: 48px; height: 48px; margin-bottom: 1px; }
.cell.big .caret { margin: 4px 0 0; }
.cell.sp { grid-row: span 3; }
.cell.big.on {
  margin: 1px 3px 3px;
  background: #4a5a70;
  border: 1px solid #5fa8de;
  box-sizing: border-box;
}
.cell.big.on .ic { width: 44px; height: 44px; margin: 3px 0 0; }
.cell.big.on .label { margin-top: 0; }
.cell.on:not(.big) { border: 1px solid #5fa8de; margin: 1px 6px 0; background: #3f4d60; }
.cell.combo {
  margin: 3px 0 2px;
  justify-content: flex-start;
  background: #4a5266;
  border-top: 1px solid #30363f;
  padding: 0 2px;
}
.cell.combo .ic { width: 22px; height: 22px; }
.cell.combo .label { margin-left: 3px; }
.cell.combo .caret { border-width: 5px 5px 0; margin-left: auto; margin-right: 2px; }
.cell.combo.narrow { margin-left: 8px; margin-right: -3px; }
.cell.layer { margin-right: 5px; }
.cell.layer .ic { margin: 0 2px; width: 20px; height: 20px; }
.cell.layer .label { margin-left: 8px; font-size: 16px; color: #c8ccd4; }

/* doc tabs */
.slash {
  display: inline-block;
  flex: none;
  width: 1px;
  height: 22px;
  background: #3c4250;
  transform: skewX(-18deg);
}
.doc-tabs { height: 34px; display: flex; align-items: center; padding-left: 16px; color: #c9ccd3; font-size: 15px; flex: none; }
.dt { white-space: nowrap; margin-top: 2px; }
.w-a { margin-left: 12px; margin-right: 15px; }
.w-b { margin-left: 15px; margin-right: 26px; }
.w-c { margin-left: 17px; margin-right: 0; }
.dt-active {
  height: 34px;
  width: 136px;
  margin-left: 24px;
  flex: none;
  display: flex;
  align-items: center;
  padding: 2px 0 0 21px;
  box-sizing: border-box;
  background: #3a4254;
  clip-path: polygon(10px 0, 100% 0, calc(100% - 10px) 100%, 0 100%);
  color: #e8eaee;
}
.dt-active b { font-weight: 600; font-size: 15px; }
.dt-active em { font-style: normal; margin-left: 12px; font-size: 14px; color: #b8bcc4; }
.plus { margin-left: 10px; margin-right: 12px; font-size: 26px; line-height: 1; color: #e8e8e8; }
.rule { height: 5px; background: #3f4655; flex: none; }
.rule.low { height: 6px; background: #3a4150; }

/* drawing area */
.viewport { height: 742px; flex: none; position: relative; background: #212630; overflow: hidden; }
.scene { position: absolute; inset: 0; width: 1920px; height: 742px; }
.view-label { position: absolute; left: 4px; top: 1px; font-size: 16px; letter-spacing: 0.5px; color: #d8dbe1; }
.cube { position: absolute; left: 1760px; top: 38px; width: 160px; height: 170px; }
.cube-t { font-family: "Noto Sans CJK SC", sans-serif; text-anchor: middle; }
.ucs-name {
  position: absolute;
  left: 1800px;
  top: 176px;
  width: 68px;
  height: 20px;
  border-radius: 5px;
  background: #7c8393;
  color: #a4a9b4;
  font-size: 11px;
  line-height: 20px;
  text-align: center;
}
.nav-bar { position: absolute; left: 1878px; top: 228px; width: 40px; height: 258px; background: #4e545f; border-radius: 2px; }
.cmd { position: absolute; left: 396px; top: 670px; width: 1129px; height: 72px; display: flex; }
.cmd-handle { width: 30px; background: #2a303b; display: flex; flex-direction: column; align-items: center; }
.grip { width: 20px; height: 6px; margin-top: 5px; background: repeating-linear-gradient(90deg, #b8bcc4 0 2px, transparent 2px 4px); }
.cmd-handle svg { width: 22px; height: 22px; margin-top: 6px; }
.cmd-main { flex: 1; display: flex; flex-direction: column; color: #17191d; }
.cmd-hist { height: 47px; background: rgba(154, 154, 154, 0.92); padding: 6px 0 0 4px; box-sizing: border-box; font-size: 15px; line-height: 19px; border-bottom: 1px solid #23272f; }
.cmd-input { flex: 1; background: rgba(193, 193, 193, 0.92); display: flex; align-items: center; padding-left: 4px; }
.cmd-input svg { width: 22px; height: 20px; }
.cmd-hint { margin-left: 8px; font-style: italic; color: #7d7d7d; font-size: 15px; }
.cmd-up {
  margin-left: auto;
  margin-right: 7px;
  border-left: 5px solid transparent;
  border-right: 5px solid transparent;
  border-bottom: 6px solid #555;
}

/* layout tabs + status */
.layouts { height: 34px; display: flex; align-items: center; flex: none; color: #cfd2d9; }
.layouts > .lt, .layouts > .slash, .layouts > .plus { margin-top: -4px; }
.lt-active {
  width: 68px;
  height: 34px;
  margin-left: 10px;
  background: #3a4254;
  clip-path: polygon(10px 0, 100% 0, calc(100% - 10px) 100%, 0 100%);
  text-align: center;
  line-height: 30px;
  color: #eceef2;
  flex: none;
}
.lt-1 { margin-left: 13px; margin-right: 15px; }
.lt-2 { margin-left: 16px; margin-right: 15px; }
.small-plus { font-size: 22px; margin-left: 14px; margin-right: 17px; }
.status { margin-left: auto; display: flex; height: 31px; gap: 2px; align-self: flex-start; margin-top: 2px; }
.sgroup { display: flex; align-items: center; background: #3a4254; }
.coords { width: 224px; box-sizing: border-box; padding-right: 7px; justify-content: flex-end; font-size: 14px; color: #e2e4e9; white-space: nowrap; }
.model { width: 40px; justify-content: center; font-size: 14.5px; color: #e6e8ec; }
.sitem { height: 31px; display: flex; align-items: center; justify-content: center; }
.sitem .ic { width: 22px; height: 22px; }
.sitem .caret { margin: 0; border-width: 5px 5px 0; }
.sitem.on { background: #6196c9; }

/* taskbar */
.taskbar { height: 51px; flex: none; position: relative; display: flex; align-items: center; background: linear-gradient(90deg, #3b3b27, #2d3122); }
.watermark { position: absolute; left: 12px; top: 1px; display: flex; align-items: center; pointer-events: none; }
.watermark i { width: 38px; height: 38px; border-radius: 8px; background: rgba(170, 170, 165, 0.55); }
.watermark span { margin-left: 8px; font: 700 33px "Noto Sans", sans-serif; color: rgba(210, 210, 205, 0.4); letter-spacing: 1px; }
.start { position: absolute; left: 20px; top: 15px; width: 20px; height: 20px; }
.task { position: absolute; top: 0; bottom: 0; display: flex; justify-content: center; padding-top: 10px; box-sizing: border-box; border-bottom: 3px solid #79b8e4; }
.t1 { left: 69px; width: 51px; }
.t2 { left: 126px; width: 60px; background: rgba(255, 255, 255, 0.13); }
.t3 { left: 193px; width: 51px; }
.tile { width: 30px; height: 30px; border-radius: 3px; display: flex; flex-direction: column; align-items: center; color: #fff; }
.tile span { font: 700 27px/30px "Liberation Sans", sans-serif; }
.green { background: #5aa81e; }
.red { background: #d2175b; }
.red b { font: 700 15px/19px "Liberation Sans", sans-serif; }
.red small { width: 100%; background: #8c1539; font: 700 8px/10px "Liberation Sans", sans-serif; text-align: center; }
.orange { background: #f0553b; }
.tray { margin-left: auto; display: flex; align-items: center; padding-right: 29px; gap: 6px; }
.tray svg { width: 24px; height: 24px; }
.tray span { margin: 0 14px 0 6px; font-size: 15px; color: #e4e4e4; }
</style>
<style>
html, body { margin: 0; background: #1f2531; }
</style>
